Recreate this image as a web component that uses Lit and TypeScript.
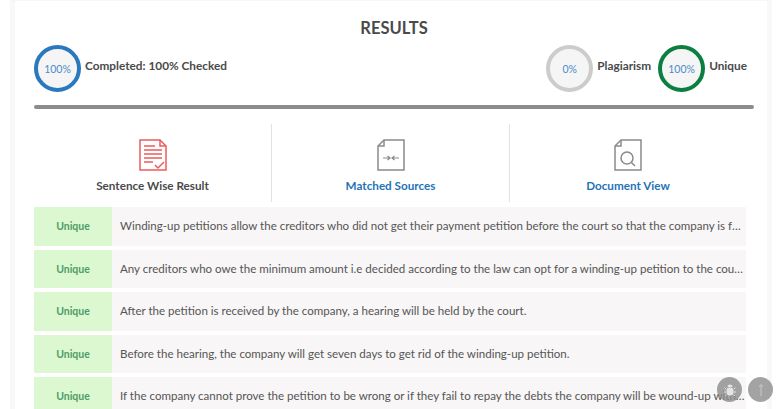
import { LitElement, html, css, svg } from 'lit';
import { customElement } from 'lit/decorators.js';

const rows = [
  'Winding-up petitions allow the creditors who did not get their payment petition before the court so that the company is forced to repay the debts it owes.',
  'Any creditors who owe the minimum amount i.e decided according to the law can opt for a winding-up petition to the court against the company.',
  'After the petition is received by the company, a hearing will be held by the court.',
  'Before the hearing, the company will get seven days to get rid of the winding-up petition.',
  'If the company cannot prove the petition to be wrong or if they fail to repay the debts the company will be wound-up with the help of the court.',
];

const sheet = (color: string, inner: unknown) => html`
  <svg class="doc" width="30" height="34" viewBox="0 0 30 34" fill="none" stroke=${color} stroke-width="1.5">
    ${inner}
  </svg>
`;

const reportIcon = sheet('#ef5b5b', svg`
  <path d="M2 2h20l6 6v24H2z" />
  <path d="M22 2v6h6" />
  <path d="M6 8h11M6 12h18M6 16h18M6 20h18M6 24h9" />
  <path d="M17 27l3 3 6-6" />
`);

const matchIcon = sheet('#8a8a8a', svg`
  <path d="M8 2h20v30H2V8z" />
  <path d="M8 2v6H2" />
  <path d="M7 20h7M11.5 18l2.5 2-2.5 2M23 20h-7M18.5 18L16 20l2.5 2" stroke-width="1.2" />
`);

const viewIcon = sheet('#8a8a8a', svg`
  <path d="M8 2h20v30H2V8z" />
  <path d="M8 2v6H2" />
  <circle cx="14" cy="20" r="6" />
  <path d="M18.5 24.5l3.5 3.5" />
`);

@customElement('app-root')
export class AppRoot extends LitElement {
  static styles = css`
    :host {
      display: block;
      height: 409px;
      overflow: hidden;
      background: #fff;
      font-family: Lato, 'Open Sans', sans-serif;
      color: #4a4a4a;
    }

    .card {
      box-sizing: border-box;
      height: 409px;
      margin: 0 8px 0 10px;
      padding: 0 13px 0 19px;
      border-left: 5px solid #f8f8f8;
      border-right: 5px solid #f8f8f8;
      border-top: 1px dotted #eeeeee;
    }

    h1 {
      margin: 0;
      padding-top: 17px;
      text-align: center;
      font-size: 16.5px;
      line-height: 20px;
      font-weight: 700;
      color: #4a4a4a;
    }

    .stats {
      display: flex;
      align-items: flex-start;
      margin-top: 7px;
      height: 53px;
    }

    .stat {
      display: flex;
      align-items: flex-start;
      font-size: 11.8px;
      font-weight: 700;
      line-height: 16px;
    }

    .stat span.label {
      margin: 13px 0 0 4px;
    }

    .plag {
      margin-left: auto;
      margin-right: 7px;
    }

    .unique {
      margin-right: 7px;
    }

    .ring {
      box-sizing: border-box;
      width: 47px;
      height: 47px;
      border-radius: 50%;
      border: 4px solid #ccc;
      background: #f5f5f5;
      display: flex;
      align-items: center;
      justify-content: center;
      font-size: 10.5px;
      font-weight: 400;
      color: #4c8cc8;
    }

    .ring.blue {
      border-color: #2a78bd;
    }

    .ring.green {
      border-color: #0a7f41;
    }

    .rule {
      height: 3.5px;
      border-radius: 2px;
      background: #8c8c8c;
      margin-top: 7px;
    }

    .tabs {
      display: grid;
      grid-template-columns: 237px 238px 237px;
      margin-top: 15.5px;
      height: 78px;
    }

    .tab {
      display: flex;
      flex-direction: column;
      align-items: center;
      padding-top: 14px;
      box-sizing: border-box;
      border-left: 1px solid #e2e2e2;
      font-size: 11.7px;
      font-weight: 700;
      color: #1f73b7;
    }

    .tab:first-child {
      border-left: 0;
      color: #4a4a4a;
    }

    .doc {
      display: block;
      margin-bottom: 6px;
    }

    .rows {
      display: flex;
      flex-direction: column;
      gap: 4px;
      margin-top: 5px;
      width: 712px;
    }

    .row {
      display: flex;
      height: 38.5px;
      background: #f8f6f6;
      font-size: 11.55px;
      line-height: 38px;
      color: #555;
    }

    .tag {
      flex: 0 0 78px;
      text-align: center;
      background: #dcf8d0;
      color: #4f9d69;
      font-size: 10.5px;
      font-weight: 700;
    }

    .text {
      flex: 1;
      min-width: 0;
      padding: 0 1px 0 8px;
      white-space: nowrap;
      overflow: hidden;
      text-overflow: ellipsis;
    }

    .fab {
      position: absolute;
      top: 377px;
      width: 25px;
      height: 25px;
      border-radius: 50%;
      background: rgba(140, 140, 140, 0.8);
      display: flex;
      align-items: center;
      justify-content: center;
    }

    .fab.bug {
      left: 717px;
    }

    .fab.up {
      left: 748px;
    }
  `;

  render() {
    return html`
      <div class="card">
        <h1>RESULTS</h1>
        <div class="stats">
          <div class="stat">
            <div class="ring blue">100%</div>
            <span class="label">Completed: 100% Checked</span>
          </div>
          <div class="stat plag">
            <div class="ring">0%</div>
            <span class="label">Plagiarism</span>
          </div>
          <div class="stat unique">
            <div class="ring green">100%</div>
            <span class="label">Unique</span>
          </div>
        </div>
        <div class="rule"></div>
        <div class="tabs">
          <div class="tab">${reportIcon}Sentence Wise Result</div>
          <div class="tab">${matchIcon}Matched Sources</div>
          <div class="tab">${viewIcon}Document View</div>
        </div>
        <div class="rows">
          ${rows.map(
            (r) => html`
              <div class="row">
                <div class="tag">Unique</div>
                <div class="text">${r}</div>
              </div>
            `
          )}
        </div>
      </div>
      <div class="fab bug">
        <svg width="12" height="14" viewBox="0 0 12 14" fill="#e4e4e4">
          <path d="M3.5 4a2.5 2.5 0 0 1 5 0z" />
          <rect x="2.5" y="4.6" width="7" height="8" rx="3" />
          <path d="M2 6 0.5 4.5M10 6l1.5-1.5M2 9H0M10 9h2M2.5 11.5 1 13M9.5 11.5 11 13" stroke="#e4e4e4" fill="none" />
        </svg>
      </div>
      <div class="fab up">
        <svg width="8" height="14" viewBox="0 0 8 14" fill="none" stroke="#c8c8c8">
          <path d="M4 13V2M2 4l2-2.5L6 4" />
        </svg>
      </div>
    `;
  }
}
